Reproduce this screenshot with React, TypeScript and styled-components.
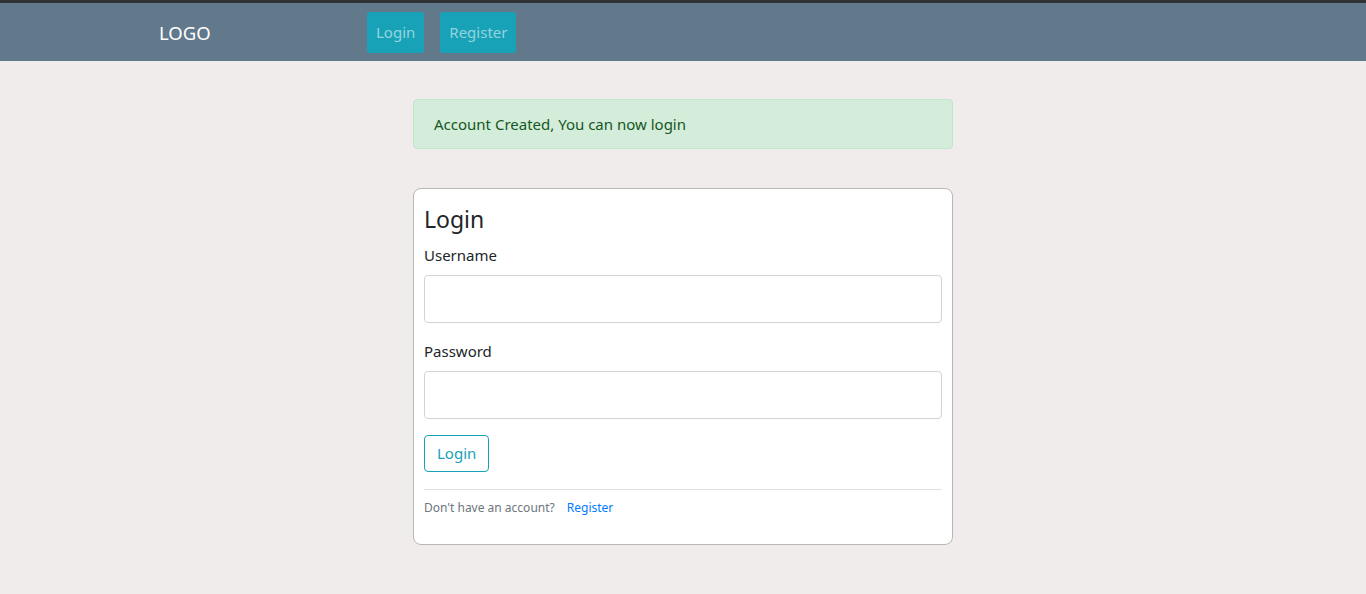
import React from "react";
import styled, { createGlobalStyle } from "styled-components";

const GlobalStyle = createGlobalStyle`
  * { box-sizing: border-box; }
  body {
    margin: 0;
    background: #f0ecec;
    font-family: "Noto Sans", "Open Sans", sans-serif;
    color: #212529;
  }
`;

const Nav = styled.nav`
  height: 61px;
  background: #62788b;
  border-top: 3px solid #2f3336;
  display: flex;
  align-items: center;
  padding-left: 159px;
`;

const Logo = styled.div`
  color: #fff;
  font-size: 18.5px;
  width: 208px;
`;

const NavLinks = styled.div`
  display: flex;
  gap: 16px;
`;

const NavButton = styled.button`
  height: 41px;
  padding: 0 9px;
  border: none;
  border-radius: 3px;
  background: #17a2b8;
  color: rgba(255, 255, 255, 0.55);
  font-family: inherit;
  font-size: 15px;
`;

const Main = styled.main`
  width: 540px;
  margin: 38px auto 0;
  display: flex;
  flex-direction: column;
  gap: 39px;
`;

const Alert = styled.div`
  height: 50px;
  padding: 0 20px;
  display: flex;
  align-items: center;
  background: #d4edda;
  border: 1px solid #c3e6cb;
  border-radius: 4px;
  color: #155724;
  font-size: 15px;
`;

const Card = styled.section`
  background: #fff;
  border: 1px solid #b9b6b6;
  border-radius: 8px;
  padding: 16px 10px 28px;
`;

const Title = styled.h2`
  margin: 0 0 10px;
  font-size: 23px;
  font-weight: 400;
  line-height: 1.3;
`;

const Field = styled.div<{ last?: boolean }>`
  display: flex;
  flex-direction: column;
  margin-bottom: ${(p) => (p.last ? 16 : 18)}px;
`;

const Label = styled.label`
  font-size: 15px;
  margin-bottom: 10px;
`;

const Input = styled.input`
  height: 48px;
  border: 1px solid #ced4da;
  border-radius: 4px;
  padding: 6px 12px;
  font-size: 16px;
`;

const SubmitButton = styled.button`
  height: 37px;
  padding: 0 12px;
  background: #fff;
  border: 1px solid #17a2b8;
  border-radius: 4px;
  color: #17a2b8;
  font-family: inherit;
  font-size: 15px;
`;

const Divider = styled.hr`
  border: none;
  border-top: 1px solid #dee2e6;
  margin: 17px 0 9px;
`;

const Footer = styled.small`
  display: flex;
  gap: 12px;
  font-size: 12px;
  color: #6c757d;
`;

const Link = styled.a`
  color: #007bff;
  text-decoration: none;
`;

export default function App(): JSX.Element {
  return (
    <>
      <GlobalStyle />
      <Nav>
        <Logo>LOGO</Logo>
        <NavLinks>
          <NavButton>Login</NavButton>
          <NavButton>Register</NavButton>
        </NavLinks>
      </Nav>
      <Main>
        <Alert>Account Created, You can now login</Alert>
        <Card>
          <Title>Login</Title>
          <Field>
            <Label>Username</Label>
            <Input type="text" />
          </Field>
          <Field last>
            <Label>Password</Label>
            <Input type="password" />
          </Field>
          <SubmitButton>Login</SubmitButton>
          <Divider />
          <Footer>
            Don't have an account?
            <Link href="#">Register</Link>
          </Footer>
        </Card>
      </Main>
    </>
  );
}
